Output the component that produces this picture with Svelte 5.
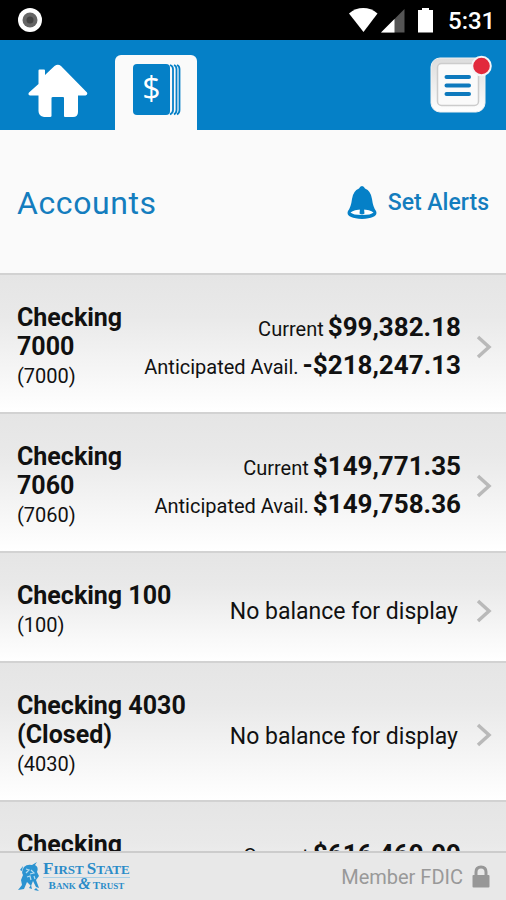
<script lang="ts">
	type Balance = { label: string; amount: string };
	type Account = { name: string; mask: string; balances: Balance[] };

	const accounts: Account[] = [
		{
			name: 'Checking 7000',
			mask: '7000',
			balances: [
				{ label: 'Current', amount: '$99,382.18' },
				{ label: 'Anticipated Avail.', amount: '-$218,247.13' }
			]
		},
		{
			name: 'Checking 7060',
			mask: '7060',
			balances: [
				{ label: 'Current', amount: '$149,771.35' },
				{ label: 'Anticipated Avail.', amount: '$149,758.36' }
			]
		},
		{ name: 'Checking 100', mask: '100', balances: [] },
		{ name: 'Checking 4030 (Closed)', mask: '4030', balances: [] },
		{
			name: 'Checking 8010',
			mask: '8010',
			balances: [
				{ label: 'Current', amount: '$616,469.99' },
				{ label: 'Anticipated Avail.', amount: '$616,469.99' }
			]
		}
	];
</script>

<div class="screen">
	<div class="status-bar">
		<svg class="record" width="26" height="26" viewBox="0 0 26 26">
			<circle cx="13" cy="13" r="12" fill="#fff" />
			<circle cx="13" cy="13" r="7.5" fill="#666" />
			<circle cx="13" cy="13" r="3.5" fill="#444" />
		</svg>
		<svg class="signals" width="90" height="26" viewBox="0 0 90 26">
			<path d="M1 6.5C9.5-.8 21-.8 29.500 6.500L15.500 25Z" fill="#fff" />
			<path d="M56.500 2V25.500H33Z" fill="#555" />
			<path d="M46.500 12V25.500H33Z" fill="#fff" />
			<path d="M74 1h7v2h4v22.500H70V3h4Z" fill="#fff" />
		</svg>
		<span class="clock">5:31</span>
	</div>

	<header class="nav">
		<svg class="home" width="60" height="54" viewBox="0 0 60 54">
			<path
				d="M10.500 20V6.500Q10.500 5.500 11.500 5.500H16Q17 5.500 17 6.500V11L26.500 2Q30 -.5 33 2L59 28.500Q60 31 57.500 31.500H50V48Q50 53 45 53H37Q36 53 36 52V34Q36 33 35 33H25Q23.500 33 23.500 34V52Q23.500 53 22 53H16Q10.500 52 10.500 47V31.500H2Q-.500 31 1 28.500Z"
				fill="#fff"
			/>
		</svg>
		<div class="tab">
			<svg width="48" height="52" viewBox="0 0 48 52">
				<rect x="0" y="0" width="37" height="51" rx="4" fill="#0580c7" />
				<path d="M37 1Q40 2 40 5V46Q40 49 37 50.500" class="page" />
				<path d="M41 1Q43.500 2 43.500 5V46Q43.500 49 41 50.500" class="page" />
				<path d="M44 1Q46.500 2 46.500 5V46Q46.500 49 44 50.500" class="page" />
				<text x="18.500" y="36" text-anchor="middle">$</text>
			</svg>
		</div>
		<svg class="menu" width="62" height="60" viewBox="0 0 62 60">
			<defs>
				<linearGradient id="frame" x1="0" y1="0" x2="0" y2="1">
					<stop offset="0" stop-color="#dcdcdc" />
					<stop offset="1" stop-color="#fff" />
				</linearGradient>
			</defs>
			<rect x="1" y="3" width="54" height="54" rx="9" fill="url(#frame)" stroke="#f1f1f1" />
			<rect x="7.500" y="8.500" width="41" height="42" rx="4" fill="#fafafa" stroke="#ccc" stroke-width="1.500" />
			<path d="M16.500 22H39M16.500 30.500H39M16.500 39H39" stroke="#0d79bd" stroke-width="4" stroke-linecap="round" />
			<circle cx="51.500" cy="11" r="9.300" fill="#e2293c" stroke="#f4f4f6" stroke-width="2" />
		</svg>
	</header>

	<div class="title-bar">
		<h1>Accounts</h1>
		<div class="alerts">
			<svg width="30" height="34" viewBox="0 0 30 34">
				<path
					d="M15 0Q17 0 18 2.500Q24 5 25 13Q26 21 29 25Q32 32 15 33Q-2 32 1 25Q4 21 5 13Q6 5 12 2.500Q13 0 15 0Z"
					fill="#0580c7"
				/>
				<path d="M3.500 26.500Q7 23.500 15 23.500T26.500 26.500Q24 29 15 29T3.500 26.500Z" fill="#fff" />
				<path d="M13 23h4l.5 4.500q-2.500 2-5 0Z" fill="#0580c7" />
			</svg>
			<span>Set Alerts</span>
		</div>
	</div>

	<main class="accounts">
		{#each accounts as account}
			<div class="account">
				<div class="info" class:wide={!account.balances.length}>
					<div class="name">{account.name}</div>
					<div class="mask">({account.mask})</div>
				</div>
				<div class="balances">
					{#each account.balances as balance}
						<div class="balance">
							<span class="label">{balance.label}</span>
							<span class="amount">{balance.amount}</span>
						</div>
					{:else}
						<div class="empty">No balance for display</div>
					{/each}
				</div>
				<svg class="chevron" width="16" height="24" viewBox="0 0 16 24">
					<path d="M2 2L13 12L2 22" fill="none" stroke="#b9b9b9" stroke-width="3.500" />
				</svg>
			</div>
		{/each}
	</main>

	<footer class="footer">
		<div class="brand">
			<svg width="24" height="30" viewBox="0 0 24 30" fill="#2b93d1">
				<path d="M15 3L20 0L18 3Q22 5 20 10L22 14L19 18L22 26L19 25L16 19L14 24L10 20L7 27L1 28L5 23L4 18L6 13Q4 10 7 5Q10 2 15 3Z" />
				<path d="M12 26l2-3 1 4zM17 28l2-2 3 3zM3 8L6 4L5 9Z" />
				<path d="M9 7l3 1-3 3M14 8l3 3-4 1M10 15l3-1 1 4M17 14l1 3" fill="none" stroke="#b7dcef" stroke-width="1.200" />
			</svg>
			<div class="brand-text">
				<div class="brand-top"><b>F</b>IRST <b>S</b>TATE</div>
				<div class="brand-bottom"><b>B</b>ANK <i>&amp;</i> <b>T</b>RUST</div>
			</div>
		</div>
		<div class="fdic">
			<span>Member FDIC</span>
			<svg width="18" height="23" viewBox="0 0 18 23">
				<path d="M4 11V7Q4 2 9 2T14 7V11" fill="none" stroke="#979797" stroke-width="3" />
				<rect x="0.500" y="10" width="17" height="12.500" rx="1" fill="#979797" />
			</svg>
		</div>
	</footer>
</div>

<style>
	:global(body) {
		margin: 0;
	}

	.screen {
		display: flex;
		flex-direction: column;
		width: 506px;
		height: 900px;
		overflow: hidden;
		background: #fafafa;
		font-family: Roboto, sans-serif;
		color: #111;
	}

	.status-bar {
		display: flex;
		flex: none;
		align-items: center;
		box-sizing: border-box;
		height: 40px;
		padding: 0 14px 0 17px;
		background: #000;
	}
	.signals {
		margin-left: auto;
		margin-right: 10px;
	}
	.clock {
		width: 44px;
		font-size: 24px;
		font-weight: 500;
		line-height: 40px;
		padding-top: 2px;
		color: #fff;
	}

	.nav {
		display: flex;
		flex: none;
		box-sizing: border-box;
		height: 90px;
		padding: 0 14px 0 28px;
		background: #0580c7;
	}
	.home {
		margin-top: 24px;
	}
	.tab {
		box-sizing: border-box;
		width: 82px;
		margin: 15px 0 0 27px;
		padding: 9px 0 0 18px;
		border-radius: 6px 6px 0 0;
		background: #fafafa;
	}
	.tab text {
		font-family: 'Open Sans', sans-serif;
		font-size: 32px;
		fill: #fff;
	}
	.page {
		fill: none;
		stroke: #0580c7;
		stroke-width: 1.8;
	}
	.menu {
		margin: 15px 0 0 auto;
	}

	.title-bar {
		display: flex;
		flex: none;
		align-items: center;
		justify-content: space-between;
		box-sizing: border-box;
		height: 143px;
		padding: 2px 17px 0;
		color: #147dbe;
	}
	h1 {
		margin: 0;
		font-size: 32px;
		font-weight: 400;
		letter-spacing: 0.6px;
	}
	.alerts {
		display: flex;
		align-items: center;
		gap: 11px;
		font-size: 23px;
		font-weight: 500;
	}

	.accounts {
		flex: 1;
		min-height: 0;
		overflow: hidden;
	}
	.account {
		display: flex;
		align-items: center;
		box-sizing: border-box;
		padding: 28px 14px 21px 17px;
		border-top: 2px solid #d2d2d2;
		background: linear-gradient(#e5e5e5, #e9e9e9 30%, #fff);
	}
	.info {
		width: 125px;
	}
	.info.wide {
		width: 190px;
	}
	.name {
		font-size: 25px;
		font-weight: 700;
		line-height: 29px;
	}
	.mask {
		font-size: 20px;
		line-height: 30px;
	}
	.balances {
		flex: 1;
		margin-right: 15px;
		text-align: right;
		white-space: nowrap;
	}
	.balance {
		display: flex;
		align-items: baseline;
		justify-content: flex-end;
		gap: 4px;
		line-height: 36px;
	}
	.label {
		font-size: 20px;
	}
	.amount {
		font-size: 26px;
		font-weight: 700;
	}
	.empty {
		padding: 2px 3px 0 0;
		font-size: 23px;
	}

	.footer {
		display: flex;
		flex: none;
		align-items: center;
		justify-content: space-between;
		box-sizing: border-box;
		height: 49px;
		padding: 0 16px 0 17px;
		border-top: 2px solid #ccc;
		background: #e8e8e8;
	}
	.brand {
		display: flex;
		align-items: center;
		gap: 2px;
		font-family: 'Liberation Serif', serif;
		color: #2b8cc8;
	}
	.brand-text {
		white-space: nowrap;
	}
	.brand-top {
		border-bottom: 1px solid #a9cfe5;
		font-size: 13px;
		font-weight: 700;
		line-height: 15px;
	}
	.brand-top b {
		font-size: 17px;
	}
	.brand-bottom {
		font-size: 9px;
		font-weight: 700;
		line-height: 12px;
		text-align: center;
	}
	.brand-bottom b {
		font-size: 11px;
	}
	.brand-bottom i {
		font-size: 16px;
	}
	.fdic {
		display: flex;
		align-items: center;
		gap: 9px;
		font-size: 20px;
		color: #999;
	}
</style>
